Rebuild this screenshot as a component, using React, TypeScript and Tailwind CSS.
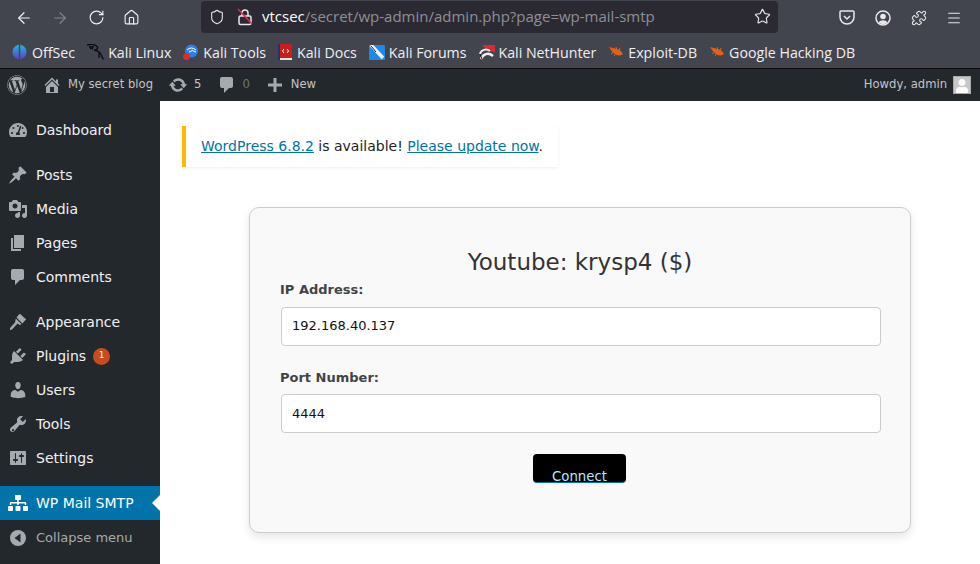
import { ArrowLeft, ArrowRight, Home, Menu, Puzzle, RotateCw, Shield, Star } from "lucide-react";
import { FaSitemap, FaTachometerAlt, FaUser, FaWordpress } from "react-icons/fa";
import type { ReactNode } from "react";

const sans = "font-['DejaVu_Sans',sans-serif]";

// dashicon shapes, all on a 20x20 box
const dash = {
  home: "M16 8.500l1.530 1.530-1.060 1.060L10 4.620l-6.470 6.470-1.060-1.060L10 2.500l4 4v-2h2v4zm-6-2.460l6 5.990V18H4v-5.970zM12 17v-5H8v5h4z",
  update:
    "M10.200 3.280c3.530 0 6.430 2.610 6.920 6h2.080l-3.500 4-3.500-4h2.320c-.45-1.970-2.210-3.440-4.320-3.440-1.450 0-2.730.71-3.540 1.780L4.950 5.660C6.230 4.200 8.110 3.280 10.200 3.280zm-.4 13.440c-3.520 0-6.430-2.610-6.920-6H.8l3.500-4c1.170 1.330 2.330 2.670 3.500 4H5.480c.45 1.970 2.210 3.440 4.320 3.440 1.450 0 2.730-.71 3.540-1.780l1.710 1.950c-1.280 1.460-3.150 2.390-5.250 2.390z",
  comment: "M5 2h9c1.100 0 2 .9 2 2v7c0 1.100-.9 2-2 2h-2l-5 5v-5H5c-1.100 0-2-.9-2-2V4c0-1.100.9-2 2-2z",
  plus: "M17 8.500v3h-5.500V17h-3v-5.500H3v-3h5.500V3h3v5.500z",
  post: "M10.440 3.020l1.820-1.820 6.360 6.350-1.830 1.820c-1.050-.68-2.480-.57-3.410.36l-.75.75c-.92.93-1.040 2.350-.35 3.410l-1.830 1.820-2.410-2.410-2.800 2.790c-.42.42-3.380 2.710-3.800 2.290s1.860-3.390 2.280-3.810l2.790-2.790L4.100 9.360l1.830-1.820c1.050.69 2.480.57 3.400-.36l.75-.75c.93-.92 1.050-2.350.36-3.410z",
  media:
    "M13 11V4c0-.55-.45-1-1-1h-1.670L9 1H5L3.670 3H2c-.55 0-1 .45-1 1v7c0 .55.45 1 1 1h10c.55 0 1-.45 1-1zM7 4.500c1.380 0 2.500 1.120 2.500 2.500S8.380 9.500 7 9.500 4.500 8.380 4.500 7 5.620 4.500 7 4.500zM14 6h5v10.500c0 1.380-1.120 2.500-2.500 2.500S14 17.880 14 16.500s1.120-2.500 2.500-2.500c.17 0 .34.020.5.050V9h-3V6zm-4 8.050V13h2v3.500c0 1.380-1.120 2.500-2.500 2.500S7 17.880 7 16.500 8.120 14 9.500 14c.17 0 .34.020.5.050z",
  page: "M6 15V2h10v13H6zm-1 1h8v2H3V5h2v11z",
  brush:
    "M10.500 3L12 1.800l6.200 5.700-2.200 2-1.500 2-6-6zM7.800 6.500l5.800 5.800-1.900.7-2.200-1.500L4 17.500c-1.500 1-2 0-2 0s-.5-1 .5-2L7 10.500z",
  plugin:
    "M13.110 4.360L9.870 7.600 8 5.730l3.240-3.240c.35-.34 1.050-.2 1.560.32.520.51.660 1.210.310 1.550zm-8 1.770l.91-1.120 9.010 9.010-1.190.840c-.710.710-2.630 1.160-3.820 1.160H6.140L4.900 17.260c-.59.590-1.540.590-2.120 0-.59-.580-.59-1.530 0-2.120l1.240-1.240v-3.880c0-1.130.4-3.190 1.090-3.890zm7.260 3.970l3.240-3.240c.340-.350 1.040-.21 1.550.310.520.510.660 1.210.310 1.560l-3.240 3.250z",
  users:
    "M10 9.250c-2.270 0-2.730-3.440-2.730-3.440C7 4.020 7.820 2 9.970 2c2.160 0 2.980 2.020 2.710 3.810 0 0-.41 3.440-2.680 3.440zm0 2.570L12.720 10c2.390 0 4.520 2.330 4.520 4.530v2.490s-3.650 1.130-7.240 1.130c-3.650 0-7.240-1.130-7.240-1.130v-2.490c0-2.250 1.940-4.480 4.470-4.480z",
  tools:
    "M16.680 9.770c-1.340 1.340-3.300 1.670-4.950.990l-5.410 6.520c-.99.990-2.590.990-3.570 0-.99-.980-.99-2.580 0-3.570l6.520-5.420c-.68-1.650-.35-3.610.99-4.950 1.280-1.280 3.120-1.620 4.720-1.060l-2.890 2.890 2.820 2.820 2.860-2.870c.530 1.580.18 3.390-1.090 4.650zM4.200 15.380c-.45.450-.45 1.180 0 1.630.45.450 1.180.45 1.630 0s.45-1.180 0-1.630-1.180-.45-1.630 0z",
  settings:
    "M18 16V4c0-.55-.45-1-1-1H3c-.55 0-1 .45-1 1v12c0 .55.45 1 1 1h14c.55 0 1-.45 1-1zM8 11h1c.55 0 1 .45 1 1s-.45 1-1 1H8v1.500c0 .28-.22.5-.5.5s-.5-.22-.5-.5V13H6c-.55 0-1-.45-1-1s.45-1 1-1h1V5.500c0-.28.22-.5.5-.5s.5.22.5.5V11zm5-2h-1c-.55 0-1-.45-1-1s.45-1 1-1h1V5.500c0-.28.22-.5.5-.5s.5.22.5.5V7h1c.55 0 1 .45 1 1s-.45 1-1 1h-1v5.500c0 .28-.22.5-.5.5s-.5-.22-.5-.5V9z",
};

function Dash({ d, className }: { d: string; className?: string }) {
  return (
    <svg width="20" height="20" viewBox="0 0 20 20" fill="currentColor" className={className}>
      <path d={d} fillRule="evenodd" />
    </svg>
  );
}

function Bug() {
  return (
    <svg width="16" height="12" viewBox="0 0 16 12">
      <path d="M1 1 L5 2 L9 3 Q13 4 15 8 Q11 11 7 8 Q4 6 3 4 Z" fill="#e0601c" />
      <path d="M3 8 L7 5 M6 10 L9 6 M8 1 L9 4 M12 2 L11 5" stroke="#e0601c" strokeWidth="1" />
    </svg>
  );
}

function OffSecIcon() {
  return (
    <svg width="15" height="16" viewBox="0 0 15 16">
      <defs>
        <linearGradient id="offsec" x1="0" y1="0" x2="0" y2="1">
          <stop offset="0" stopColor="#27b6d8" />
          <stop offset="1" stopColor="#5a3fc8" />
        </linearGradient>
      </defs>
      <path d="M6.800 0.500 C2 2 0.500 5 0.500 8 C0.500 11 2 14 6.800 15.500 Z" fill="url(#offsec)" />
      <path d="M8.200 0.500 C13 2 14.500 5 14.500 8 C14.500 11 13 14 8.200 15.500 Z" fill="url(#offsec)" />
    </svg>
  );
}

function KaliIcon() {
  return (
    <svg width="17" height="16" viewBox="0 0 17 16" fill="none" stroke="#0c0c0c" strokeWidth="1.300">
      <path d="M0 1 C4 0 8 0.500 10 2.500 C11.500 4 10 6.500 7 6 C10 6.500 14.500 8.500 14.500 12 L16.500 15.500 M12 9 L12 14 M2 3 L7 2.800 M3 4.500 L6 4.500" />
    </svg>
  );
}

function ToolsIcon() {
  return (
    <svg width="15" height="16" viewBox="0 0 15 16">
      <circle cx="8.500" cy="7" r="6.500" fill="#2f7fe0" />
      <path d="M4 6 Q8 2 13 6 M6 8 Q9 5 13 8" stroke="#fff" strokeWidth="1" fill="none" />
      <rect x="0" y="9" width="7" height="7" rx="3.500" fill="#e02b2b" />
    </svg>
  );
}

function DocsIcon() {
  return (
    <svg width="14" height="16" viewBox="0 0 14 16">
      <rect x="0" y="0" width="14" height="16" rx="1" fill="#c81e1e" />
      <rect x="0" y="14" width="14" height="2" fill="#e6e6e6" />
      <rect x="0" y="0" width="2" height="16" fill="#25356b" />
      <path d="M6 5 L4.500 7 L6 9 M9 5 L10.500 7 L9 9" stroke="#fff" strokeWidth="1" fill="none" />
    </svg>
  );
}

function ForumsIcon() {
  return (
    <svg width="16" height="15" viewBox="0 0 16 15">
      <rect x="0" y="0" width="16" height="15" rx="1" fill="#1f88e8" />
      <path d="M2 0 L14 13" stroke="#f2f2f2" strokeWidth="3.500" />
      <path d="M2 1 L7 7" stroke="#16202c" strokeWidth="1" />
    </svg>
  );
}

function NetHunterIcon() {
  return (
    <svg width="16" height="15" viewBox="0 0 16 15" fill="none">
      <path d="M3 0 H16 V7 L9 6 Z" fill="#e02832" />
      <path d="M1 9 C2 5 7 3 11 6" stroke="#f0f0f0" strokeWidth="2" />
      <path d="M2 14 C4 9 9 7 14 11" stroke="#f0f0f0" strokeWidth="2.500" />
      <path d="M1 9 L3 14" stroke="#1a1a1a" strokeWidth="1" />
    </svg>
  );
}

const bookmarks: { label: string; icon: ReactNode; gap: string }[] = [
  { label: "OffSec", icon: <OffSecIcon />, gap: "gap-[5px]" },
  { label: "Kali Linux", icon: <KaliIcon />, gap: "gap-[4px]" },
  { label: "Kali Tools", icon: <ToolsIcon />, gap: "gap-[5px]" },
  { label: "Kali Docs", icon: <DocsIcon />, gap: "gap-[5px]" },
  { label: "Kali Forums", icon: <ForumsIcon />, gap: "gap-[4px]" },
  { label: "Kali NetHunter", icon: <NetHunterIcon />, gap: "gap-[4px]" },
  { label: "Exploit-DB", icon: <Bug />, gap: "gap-[4px]" },
  { label: "Google Hacking DB", icon: <Bug />, gap: "gap-[4px]" },
];

function InsecureLock() {
  return (
    <svg width="16" height="18" viewBox="0 0 16 18" fill="none" stroke="#e8e8ea" strokeWidth="1.500">
      <rect x="2" y="8" width="12" height="8.500" rx="1.500" />
      <path d="M5 8 V5 A3 3 0 0 1 11 5 V8" />
      <path d="M1 1 L15 16" stroke="#e22850" />
    </svg>
  );
}

function Pocket() {
  return (
    <svg width="16" height="15" viewBox="0 0 16 15" fill="none" stroke="#e8e8ea" strokeWidth="1.500">
      <path d="M2 1 H14 Q15 1 15 2 V7 A7 7 0 0 1 1 7 V2 Q1 1 2 1 Z" />
      <path d="M5 6 L8 9 L11 6" />
    </svg>
  );
}

function Account() {
  return (
    <svg width="16" height="16" viewBox="0 0 16 16">
      <circle cx="8" cy="8" r="7" fill="none" stroke="#e8e8ea" strokeWidth="1.500" />
      <circle cx="8" cy="6.500" r="2.800" fill="#e8e8ea" />
      <path d="M3.500 12.500 A5 4 0 0 1 12.500 12.500 A6.500 6.500 0 0 1 3.500 12.500" fill="#e8e8ea" />
    </svg>
  );
}

function BrowserChrome() {
  return (
    <div className="flex h-[69px] shrink-0 flex-col border-b border-[#0c0c0d] bg-[#42444e] font-['Open_Sans',sans-serif]">
      <div className="flex h-[35px] items-center">
        <ArrowLeft className="ml-[15px] text-[#f0f0f2]" size={18} strokeWidth={1.600} />
        <ArrowRight className="ml-[18px] text-[#82848b]" size={18} strokeWidth={1.600} />
        <RotateCw className="ml-[19px] text-[#f0f0f2]" size={17} strokeWidth={1.600} />
        <Home className="ml-[18px] text-[#f0f0f2]" size={17} strokeWidth={1.600} />
        <div className="mb-[2px] ml-[61px] flex h-[32px] w-[577px] items-center rounded-[4px] bg-[#2b2a33]">
          <Shield className="ml-[8px] text-[#e8e8ea]" size={16} strokeWidth={1.600} />
          <div className="ml-[12px]">
            <InsecureLock />
          </div>
          <span className="ml-[9px] text-[15px] text-[#fbfbfe]">
            vtcsec<span className="text-[#8f8f96]">/secret/wp-admin/admin.php?page=wp-mail-smtp</span>
          </span>
          <Star className="ml-auto mr-[7px] text-[#e8e8ea]" size={17} strokeWidth={1.600} />
        </div>
        <div className="ml-[61px]">
          <Pocket />
        </div>
        <div className="ml-[20px]">
          <Account />
        </div>
        <Puzzle className="ml-[20px] text-[#e8e8ea]" size={16} strokeWidth={1.600} />
        <Menu className="ml-[19px] text-[#e8e8ea]" size={16} strokeWidth={1.600} />
      </div>
      <div className="flex h-[33px] items-center gap-[12px] pl-[12px] pt-[2px] text-[14.200px] text-[#f0f0f2]">
        {bookmarks.map((b) => (
          <div key={b.label} className={`flex items-center ${b.gap}`}>
            {b.icon}
            <span>{b.label}</span>
          </div>
        ))}
      </div>
    </div>
  );
}

function AdminBar() {
  return (
    <div className={`flex h-[32px] shrink-0 items-center bg-[#23282d] text-[11.600px] text-[#c3c4c7] ${sans}`}>
      <FaWordpress className="ml-[7px] text-[#a7aaad]" size={20} />
      <Dash d={dash.home} className="ml-[15px] text-[#a7aaad]" />
      <span className="ml-[6px]">My secret blog</span>
      <Dash d={dash.update} className="ml-[15px] text-[#a7aaad]" />
      <span className="ml-[6px]">5</span>
      <Dash d={dash.comment} className="ml-[16px] text-[#a7aaad]" />
      <span className="ml-[5px] text-[#6f7478]">0</span>
      <Dash d={dash.plus} className="ml-[15px] text-[#a7aaad]" />
      <span className="ml-[6px]">New</span>
      <span className="ml-auto">Howdy, admin</span>
      <div className="ml-[6px] mr-[9px] flex h-[18px] w-[18px] items-end justify-center overflow-hidden border border-[#a7aaad] bg-[#c8c8c8]">
        <FaUser className="text-white" size={14} />
      </div>
    </div>
  );
}

function CollapseIcon() {
  return (
    <svg width="16" height="16" viewBox="0 0 16 16">
      <circle cx="8" cy="8" r="8" fill="currentColor" />
      <path d="M10.500 3.500 V12.500 L4.500 8 Z" fill="#23282d" />
    </svg>
  );
}

const menuGroups: { label: string; icon: ReactNode; badge?: string }[][] = [
  [{ label: "Dashboard", icon: <FaTachometerAlt size={18} /> }],
  [
    { label: "Posts", icon: <Dash d={dash.post} /> },
    { label: "Media", icon: <Dash d={dash.media} /> },
    { label: "Pages", icon: <Dash d={dash.page} /> },
    { label: "Comments", icon: <Dash d={dash.comment} /> },
  ],
  [
    { label: "Appearance", icon: <Dash d={dash.brush} /> },
    { label: "Plugins", icon: <Dash d={dash.plugin} />, badge: "1" },
    { label: "Users", icon: <Dash d={dash.users} /> },
    { label: "Tools", icon: <Dash d={dash.tools} /> },
    { label: "Settings", icon: <Dash d={dash.settings} /> },
  ],
];

function Sidebar() {
  return (
    <aside className={`flex w-[160px] shrink-0 flex-col bg-[#23282d] pt-[12px] text-[14px] text-[#f0f0f1] ${sans}`}>
      {menuGroups.map((group, i) => (
        <div key={i} className="mb-[11px]">
          {group.map((item) => (
            <div key={item.label} className="flex h-[34px] items-center">
              <div className="flex w-[36px] shrink-0 justify-center text-[#a7aaad]">{item.icon}</div>
              <span>{item.label}</span>
              {item.badge && (
                <span className="ml-[7px] flex h-[17px] w-[17px] items-center justify-center rounded-full bg-[#ca4a1f] text-[9px] text-white">
                  {item.badge}
                </span>
              )}
            </div>
          ))}
        </div>
      ))}
      <div className="flex h-[34px] items-center bg-[#0073aa] text-white">
        <div className="flex w-[36px] justify-center">
          <FaSitemap size={20} />
        </div>
        <span>WP Mail SMTP</span>
        <div className="ml-auto h-0 w-0 border-y-[8px] border-r-[8px] border-y-transparent border-r-white" />
      </div>
      <div className="flex h-[36px] items-center text-[13px] text-[#a7aaad]">
        <div className="flex w-[36px] justify-center">
          <CollapseIcon />
        </div>
        <span>Collapse menu</span>
      </div>
    </aside>
  );
}

function Field({ label, value }: { label: string; value: string }) {
  return (
    <div>
      <div className="text-[13px] font-bold text-[#444444]">{label}</div>
      <div className="ml-[1px] mt-[7px] flex h-[39px] w-[600px] items-center rounded-[4px] border border-[#cccccc] bg-white pl-[10px] text-[13px] text-[#111111]">
        {value}
      </div>
    </div>
  );
}

export default function App() {
  return (
    <div className="flex h-[564px] w-[980px] flex-col overflow-hidden bg-white">
      <BrowserChrome />
      <AdminBar />
      <div className="flex min-h-0 flex-1">
        <Sidebar />
        <main className={`min-w-0 flex-1 ${sans}`}>
          <div className="ml-[22px] mt-[25px] flex h-[41px] w-[376px] items-center border-l-4 border-[#ffb900] bg-white pl-[15px] text-[14px] text-[#1d2327] shadow-[0_1px_3px_rgba(0,0,0,0.08)]">
            <span>
              <a className="text-[#0073aa] underline">WordPress 6.8.2</a> is available!{" "}
              <a className="text-[#0073aa] underline">Please update now</a>.
            </span>
          </div>
          <div className="ml-[89px] mt-[40px] h-[326px] w-[662px] rounded-[10px] border border-[#cccccc] bg-[#f9f9f9] px-[30px] pt-[39px] shadow-[0_4px_10px_rgba(0,0,0,0.1)]">
            <h1 className="text-center text-[23px] leading-[30px] text-[#333333]">Youtube: krysp4 ($)</h1>
            <div className="mt-[3px]">
              <Field label="IP Address:" value="192.168.40.137" />
            </div>
            <div className="mt-[22px]">
              <Field label="Port Number:" value="4444" />
            </div>
            <div className="mt-[21px] flex justify-center">
              <button className="mr-[1px] flex h-[29px] w-[93px] items-start justify-center rounded-[4px] border-b border-[#0073aa] bg-black pt-[17px] text-[13.300px] leading-[12px] text-[#b5e6ff]">
                Connect
              </button>
            </div>
          </div>
        </main>
      </div>
    </div>
  );
}
